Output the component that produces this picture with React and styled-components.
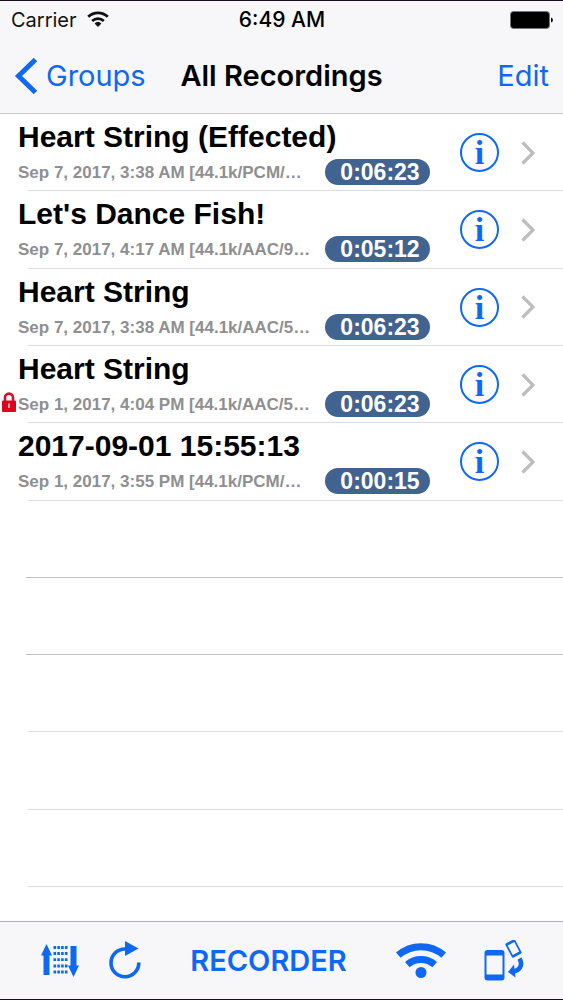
import React from "react";
import styled, { createGlobalStyle } from "styled-components";

const BLUE = "#0f68f2";
const UI = '"Inter", "Liberation Sans", sans-serif';
const TEXT = '"Liberation Sans", Arial, sans-serif';

const GlobalStyle = createGlobalStyle`
  *, *::before, *::after { box-sizing: border-box; }
  body { margin: 0; background: #fff; }
  button { border: 0; padding: 0; background: none; font: inherit; color: inherit; cursor: pointer; }
  svg { display: block; flex: none; }
  h1, h2, p, ul { margin: 0; padding: 0; }
`;

const Screen = styled.div`
  min-height: 100vh;
  display: flex;
  flex-direction: column;
  background: #fff;
  border-top: 1px solid #17101c;
  border-bottom: 1px solid #17101c;
  font-family: ${UI};
`;

const Header = styled.header`
  background: #f7f6f9;
  border-bottom: 1px solid #cfced1;
`;

const Bar = styled.div`
  display: grid;
  grid-template-columns: 1fr auto 1fr;
  align-items: center;
`;

const StatusBar = styled(Bar)`
  height: 37px;
  padding: 0 10px 0 11px;
  font-size: 20px;
  color: #111;
`;

const NavBar = styled(Bar)`
  height: 75px;
  padding: 0 14px;
`;

const Side = styled.div`
  display: flex;
  align-items: center;
  gap: 10px;
  justify-content: ${(p) => (p.$end ? "flex-end" : "flex-start")};
`;

const Time = styled.span`
  font-size: 21px;
  font-weight: 500;
  color: #000;
`;

const Title = styled.h1`
  font-size: 29px;
  font-weight: 600;
  color: #000;
`;

const NavButton = styled.button`
  && { font-size: 29px; color: ${BLUE}; }
  display: flex;
  align-items: center;
  gap: 8px;
`;

const List = styled.ul`
  flex: 1;
  display: grid;
  grid-auto-rows: minmax(77px, 1fr);
  padding-bottom: 34px;
  list-style: none;
  font-family: ${TEXT};
`;

const Row = styled.li`
  position: relative;
  display: flex;
  align-items: center;
  padding: 0 28px 0 18px;

  &::after {
    content: "";
    position: absolute;
    left: ${(p) => (p.$strong ? 26 : 28)}px;
    right: 0;
    bottom: 0;
    height: 1px;
    background: ${(p) => (p.$strong ? "#c4c4c6" : "#dcdcde")};
  }
`;

const Main = styled.div`
  flex: 1;
  min-width: 0;
  align-self: flex-start;
  padding-top: 1px;
`;

const Name = styled.h2`
  font-size: 30px;
  line-height: 44px;
  font-weight: 700;
  color: #000;
  white-space: nowrap;
`;

const Meta = styled.div`
  position: relative;
  display: flex;
  align-items: flex-start;
  justify-content: space-between;
`;

const Details = styled.p`
  font-size: 17px;
  line-height: 28px;
  font-weight: 700;
  color: #8f8f91;
  white-space: nowrap;
`;

const Duration = styled.span`
  width: 105px;
  height: 26px;
  padding-left: 5px;
  border-radius: 13px;
  background: #41638f;
  color: #fff;
  font-size: 23px;
  line-height: 26px;
  font-weight: 700;
  text-align: center;
`;

const LockBadge = styled.span`
  position: absolute;
  left: -16px;
  top: 1px;
`;

const InfoButton = styled.button`
  && {
    width: 39px;
    height: 39px;
    margin: 0 22px 0 30px;
    border: 2px solid ${BLUE};
    border-radius: 50%;
    color: ${BLUE};
    font: 700 34px/35px "Liberation Serif", "Times New Roman", serif;
  }
`;

const Toolbar = styled.footer`
  display: flex;
  align-items: center;
  justify-content: space-between;
  height: 78px;
  padding: 0 39px 0 41px;
  background: #f7f6f9;
  border-top: 1px solid #b2b1b4;
  color: ${BLUE};
`;

const ToolGroup = styled.div`
  display: flex;
  align-items: center;
  gap: ${(p) => p.$gap}px;
`;

const RecorderButton = styled.button`
  && { font-size: 29px; font-weight: 600; }
`;

const StatusWifi = () => (
  <svg width="22" height="17" viewBox="0 0 22 17" fill="none" stroke="#111" strokeWidth="2.8" aria-hidden="true">
    <path d="M1.2 5.8a14 14 0 0 1 19.6 0" />
    <path d="M5.2 9.9a8.4 8.4 0 0 1 11.6 0" />
    <path d="M7.6 12.4a5 5 0 0 1 6.8 0L11 16z" fill="#111" stroke="none" />
  </svg>
);

const Battery = () => (
  <svg width="43" height="18" viewBox="0 0 43 18" aria-hidden="true">
    <rect x="0.5" y="0.5" width="39" height="17" rx="3" fill="#000" stroke="#77777a" />
    <path d="M41 6.5q2 .5 2 2.5t-2 2.5z" fill="#111" />
  </svg>
);

const BackIcon = () => (
  <svg width="24" height="38" viewBox="0 0 24 38" fill="none" stroke={BLUE} strokeWidth="5" aria-hidden="true">
    <path d="M21.5 2.5L4.5 19l17 16.5" />
  </svg>
);

const Chevron = () => (
  <svg width="14" height="24" viewBox="0 0 14 24" fill="none" stroke="#bdbdc0" strokeWidth="3.2" aria-hidden="true">
    <path d="M1.5 1.5L12 12 1.5 22.5" />
  </svg>
);

const LockIcon = () => (
  <svg width="14" height="20" viewBox="0 0 14 20" role="img" aria-label="Locked">
    <path d="M3 10V5.6a4 4 0 0 1 8 0V10" fill="none" stroke="#d60f2c" strokeWidth="2.6" />
    <rect y="8.500" width="14" height="11.500" rx="1" fill="#d9061f" />
    <path d="M7 11.500v4.500" stroke="#f9c9cf" strokeWidth="1.600" />
  </svg>
);

const SortIcon = () => (
  <svg width="38" height="33" viewBox="0 0 38 33" fill={BLUE} aria-hidden="true">
    <path d="M5.500 0L11 11.500H8.500V31H2.500V11.500H0z" />
    <path d="M29.500 2h6v19.500H38L32.500 33 27 21.500h2.500z" />
    <path d="M12.500 3.500h14M12.500 9.500h14M12.500 15.700h14M12.500 22h14M12.500 28h14" stroke={BLUE} strokeWidth="2.800" strokeDasharray="2.600 1.200" />
  </svg>
);

const RefreshIcon = () => (
  <svg width="32" height="39" viewBox="0 0 32 39" fill="none" aria-hidden="true">
    <path d="M29.800 21.500A13.900 13.900 0 1 1 16 8" stroke={BLUE} strokeWidth="3.600" />
    <path d="M16 0l13.500 7.500L16 15z" fill={BLUE} />
  </svg>
);

const WifiIcon = () => (
  <svg width="50" height="36" viewBox="0 0 50 36" fill="none" stroke={BLUE} strokeWidth="7" aria-hidden="true">
    <path d="M2.300 12.200a34.500 34.500 0 0 1 45.400 0" />
    <path d="M11.300 21.600a21 21 0 0 1 27.400 0" />
    <circle cx="25" cy="29.500" r="5.500" fill={BLUE} stroke="none" />
  </svg>
);

const TransferIcon = () => (
  <svg width="40" height="42" viewBox="0 0 40 42" aria-hidden="true">
    <path
      fillRule="evenodd"
      fill={BLUE}
      d="M3.500 10h14a3 3 0 0 1 3 3v24.500a3 3 0 0 1-3 3h-14a3 3 0 0 1-3-3V13a3 3 0 0 1 3-3zM2.500 15.500v19h16v-19z"
    />
    <g transform="rotate(-28 29.500 8.500)">
      <path
        fillRule="evenodd"
        fill={BLUE}
        d="M25.500 .5h8a1.500 1.500 0 0 1 1.500 1.500v13a1.500 1.500 0 0 1-1.500 1.500h-8a1.500 1.500 0 0 1-1.500-1.500V2a1.500 1.500 0 0 1 1.500-1.500zM25.800 3.200v10.600h7.400V3.200z"
      />
    </g>
    <path d="M35.500 18.500c3.500 6 1 11.500-6.500 13" fill="none" stroke={BLUE} strokeWidth="4.600" />
    <path d="M24 32l6-7.500 1.500 13z" fill={BLUE} />
  </svg>
);

const recordings = [
  { name: "Heart String (Effected)", details: "Sep 7, 2017, 3:38 AM [44.1k/PCM/…", duration: "0:06:23" },
  { name: "Let's Dance Fish!", details: "Sep 7, 2017, 4:17 AM [44.1k/AAC/9…", duration: "0:05:12" },
  { name: "Heart String", details: "Sep 7, 2017, 3:38 AM [44.1k/AAC/5…", duration: "0:06:23" },
  { name: "Heart String", details: "Sep 1, 2017, 4:04 PM [44.1k/AAC/5…", duration: "0:06:23", locked: true },
  { name: "2017-09-01 15:55:13", details: "Sep 1, 2017, 3:55 PM [44.1k/PCM/…", duration: "0:00:15" },
];

const emptyRows = [true, true, false, false, false];

export default function App() {
  return (
    <Screen>
      <GlobalStyle />
      <Header>
        <StatusBar>
          <Side>
            <span>Carrier</span>
            <StatusWifi />
          </Side>
          <Time>6:49 AM</Time>
          <Side $end>
            <Battery />
          </Side>
        </StatusBar>
        <NavBar>
          <Side>
            <NavButton type="button">
              <BackIcon />
              Groups
            </NavButton>
          </Side>
          <Title>All Recordings</Title>
          <Side $end>
            <NavButton type="button">Edit</NavButton>
          </Side>
        </NavBar>
      </Header>

      <List>
        {recordings.map((r, i) => (
          <Row key={i}>
            <Main>
              <Name>{r.name}</Name>
              <Meta>
                {r.locked && (
                  <LockBadge>
                    <LockIcon />
                  </LockBadge>
                )}
                <Details>{r.details}</Details>
                <Duration>{r.duration}</Duration>
              </Meta>
            </Main>
            <InfoButton type="button" aria-label={`Info about ${r.name}`}>i</InfoButton>
            <Chevron />
          </Row>
        ))}
        {emptyRows.map((strong, i) => (
          <Row key={`empty-${i}`} $strong={strong} aria-hidden="true" />
        ))}
      </List>

      <Toolbar>
        <ToolGroup $gap={30}>
          <button type="button" aria-label="Sort"><SortIcon /></button>
          <button type="button" aria-label="Refresh"><RefreshIcon /></button>
        </ToolGroup>
        <RecorderButton type="button">RECORDER</RecorderButton>
        <ToolGroup $gap={38}>
          <button type="button" aria-label="Wi-Fi sharing"><WifiIcon /></button>
          <button type="button" aria-label="Transfer to device"><TransferIcon /></button>
        </ToolGroup>
      </Toolbar>
    </Screen>
  );
}
